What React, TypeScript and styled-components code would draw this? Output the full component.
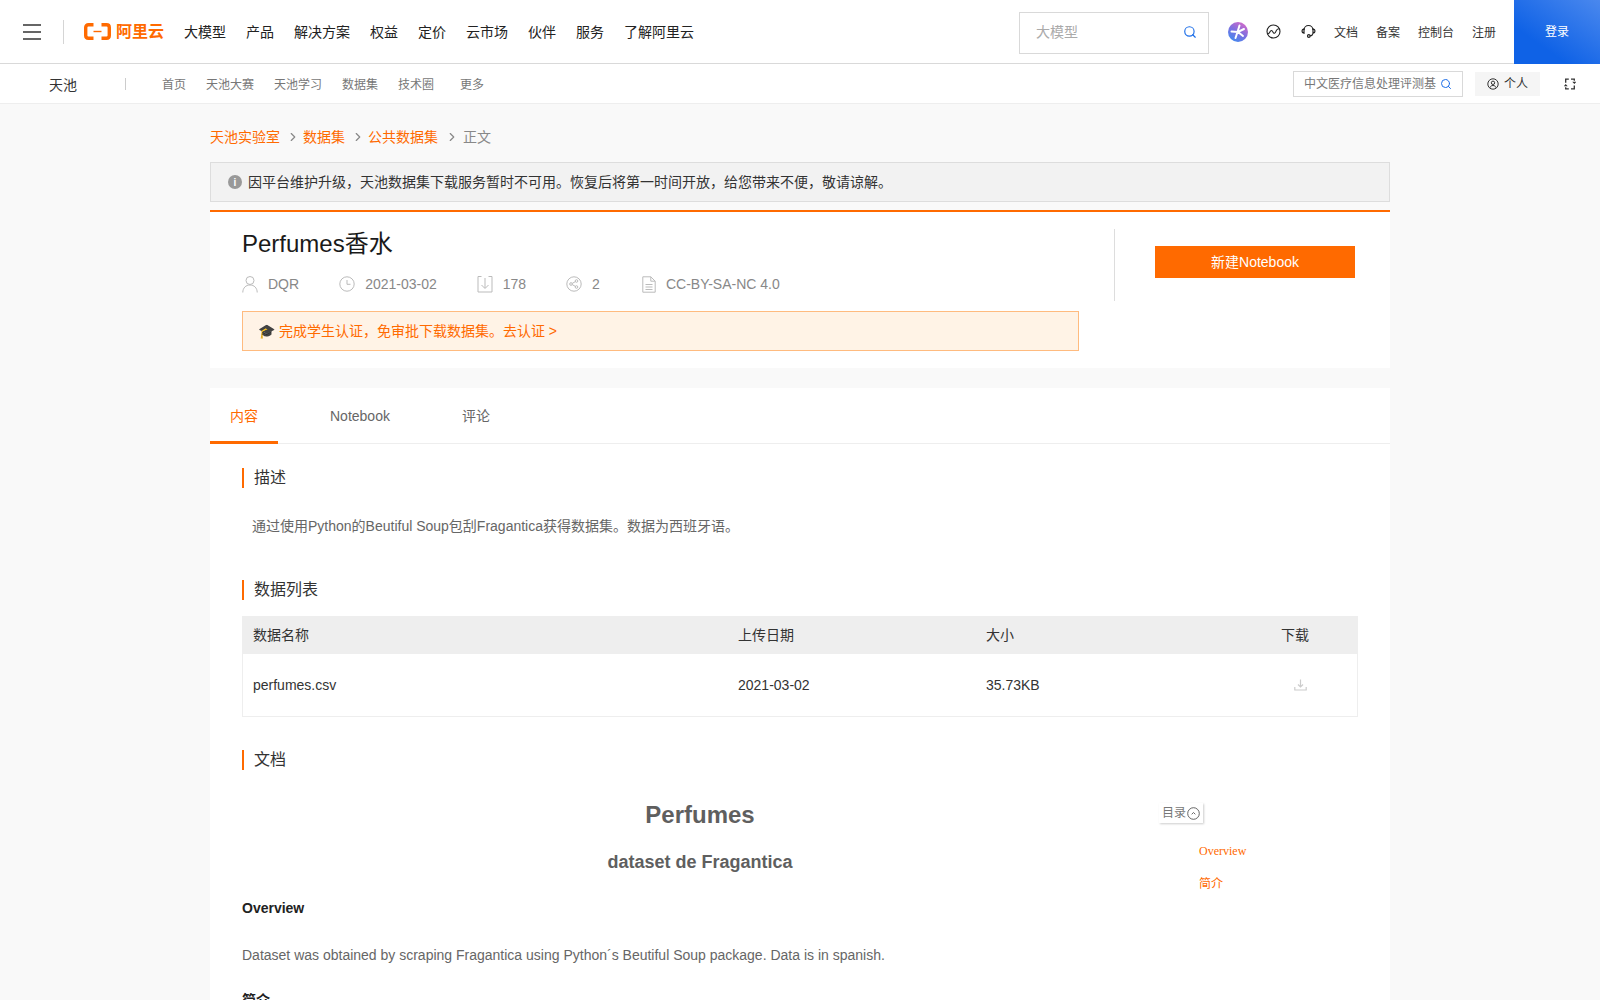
import React from 'react'
import styled, { createGlobalStyle } from 'styled-components'
import { ChevronRight, Search } from 'lucide-react'

const orange = '#ff6a00'
const fontStack = '"Liberation Sans", "Noto Sans CJK SC", sans-serif'

const GlobalStyle = createGlobalStyle`
  html, body {
    margin: 0;
    padding: 0;
    height: 100%;
    overflow: hidden;
    background: #f9f9f9;
  }
  body {
    font-family: ${fontStack};
    line-height: 1.5;
    color: #333;
  }
  * { box-sizing: border-box; }
`

const TopBar = styled.header`
  display: flex;
  align-items: center;
  height: 64px;
  padding-left: 23px;
  background: #fff;
  border-bottom: 1px solid #d9d9d9;
`

const Burger = styled.div`
  display: flex;
  flex-direction: column;
  gap: 5px;
  width: 18px;
  span {
    display: block;
    height: 2px;
    background: #666;
  }
`

const Divider = styled.div`
  width: 1px;
  height: 24px;
  margin: 0 20px 0 22px;
  background: #d5d5d5;
`

const Logo = styled.a`
  display: flex;
  align-items: center;
  gap: 5px;
  width: 80px;
  margin-right: 20px;
  color: ${orange};
  font-size: 16px;
  font-weight: bold;
  white-space: nowrap;
`

const MainNav = styled.nav`
  display: flex;
  gap: 20px;
  flex: 1;
  margin-top: 2px;
  font-size: 14px;
  color: #222;
`

const TopSearch = styled.div`
  display: flex;
  align-items: center;
  justify-content: space-between;
  width: 190px;
  height: 42px;
  margin-top: 2px;
  padding: 0 11px 0 16px;
  border: 1px solid #d9d9d9;
  color: #aaa;
  font-size: 14px;
  svg { margin-bottom: 2px; }
`

const ToolIcons = styled.div`
  display: flex;
  align-items: center;
  width: 305px;
  padding-left: 19px;
  font-size: 12px;
  color: #333;
`

const IconSlot = styled.span<{ $w: number }>`
  display: flex;
  align-items: center;
  width: ${(p) => p.$w}px;
`

const ToolLink = styled.a<{ $w: number }>`
  display: block;
  width: ${(p) => p.$w}px;
  margin-top: 2px;
  white-space: nowrap;
`

const LoginButton = styled.a`
  display: flex;
  align-items: center;
  justify-content: center;
  width: 86px;
  height: 64px;
  align-self: flex-start;
  background: linear-gradient(35deg, #0f62e6 30%, #4a88ee 100%);
  color: #fff;
  font-size: 12px;
`

const SubBar = styled.div`
  display: flex;
  align-items: center;
  height: 40px;
  padding-left: 49px;
  background: #fff;
  border-bottom: 1px solid #eee;
`

const SubTitle = styled.div`
  width: 76px;
  margin-top: 4px;
  font-size: 14px;
  color: #333;
`

const SubDivider = styled.div`
  width: 1px;
  height: 12px;
  margin-right: 36px;
  background: #ccc;
`

const SubNav = styled.nav`
  display: flex;
  gap: 20px;
  flex: 1;
  margin-top: 2px;
  font-size: 12px;
  color: #777;
`

const SubMore = styled.a`
  margin-left: 6px;
`

const SubSearch = styled.div`
  display: flex;
  align-items: center;
  gap: 4px;
  width: 170px;
  height: 26px;
  padding: 0 6px 0 10px;
  border: 1px solid #d9d9d9;
  font-size: 12px;
  color: #777;
  white-space: nowrap;
  overflow: hidden;
  svg { flex-shrink: 0; }
`

const PersonalButton = styled.a`
  display: flex;
  align-items: center;
  justify-content: center;
  gap: 5px;
  width: 65px;
  height: 24px;
  margin-left: 12px;
  background: #f5f5f5;
  font-size: 12px;
  color: #333;
`

const SwapIcon = styled.div`
  display: flex;
  justify-content: center;
  width: 60px;
`

const Page = styled.main`
  width: 1180px;
  margin: 0 auto;
`

const Crumbs = styled.div`
  display: flex;
  align-items: center;
  height: 58px;
  padding-top: 8px;
  font-size: 14px;
  color: #888;
  a { color: ${orange}; }
  svg { margin: 0 3.5px 0 5.5px; color: #888; }
  svg:last-of-type { margin: 0 4.5px 0 6.5px; }
`

const Notice = styled.div`
  display: flex;
  align-items: center;
  gap: 6px;
  height: 40px;
  padding-left: 17px;
  background: #f2f2f2;
  border: 1px solid #ddd;
  font-size: 14px;
  color: #333;
`

const InfoDot = styled.span`
  display: flex;
  align-items: center;
  justify-content: center;
  width: 14px;
  height: 14px;
  border-radius: 50%;
  background: #999;
  color: #fff;
  font-size: 10px;
  font-weight: bold;
`

const HeadCard = styled.section`
  display: flex;
  margin-top: 8px;
  height: 158px;
  background: #fff;
  border-top: 2px solid ${orange};
`

const HeadMain = styled.div`
  width: 869px;
  padding: 16px 0 0 32px;
`

const Title = styled.h1`
  margin: 0;
  font-size: 24px;
  font-weight: normal;
  line-height: 32px;
  color: #1a1a1a;
`

const MetaRow = styled.div`
  display: flex;
  align-items: center;
  gap: 40px;
  margin-top: 12px;
  height: 24px;
  font-size: 14px;
  color: #888;
`

const MetaItem = styled.span`
  display: flex;
  align-items: center;
  gap: 10px;
  svg { color: #bbb; }
  &:last-child { margin-left: 2px; }
`

const StudentAlert = styled.a`
  display: flex;
  align-items: center;
  gap: 4px;
  height: 40px;
  margin-top: 15px;
  padding-left: 15px;
  background: #fff3e6;
  border: 1px solid #ffbb7f;
  font-size: 14px;
  color: ${orange};
`

const HeadSide = styled.div`
  flex: 1;
  display: flex;
  align-items: flex-start;
  margin: 17px 0 0 35px;
  height: 72px;
  padding: 17px 0 0 40px;
  border-left: 1px solid #ddd;
`

const PrimaryButton = styled.a`
  display: flex;
  align-items: center;
  justify-content: center;
  width: 200px;
  height: 32px;
  background: ${orange};
  color: #fff;
  font-size: 14px;
`

const BodyCard = styled.section`
  margin-top: 20px;
  padding-bottom: 60px;
  background: #fff;
`

const Tabs = styled.div`
  display: flex;
  height: 56px;
  border-bottom: 1px solid #eee;
  font-size: 14px;
`

const Tab = styled.a<{ $active?: boolean; $pad: number }>`
  display: flex;
  align-items: center;
  height: 56px;
  padding: 4px ${(p) => p.$pad}px 0;
  color: ${(p) => (p.$active ? orange : '#666')};
  border-bottom: 3px solid ${(p) => (p.$active ? orange : 'transparent')};
`

const Content = styled.div`
  padding: 0 32px;
`

const SectionTitle = styled.h3<{ $top: number }>`
  margin: ${(p) => p.$top}px 0 0;
  padding-left: 10px;
  border-left: 2px solid ${orange};
  font-size: 16px;
  font-weight: normal;
  line-height: 20px;
  color: #333;
`

const Description = styled.p`
  margin: 28px 0 0 10px;
  font-size: 14px;
  line-height: 20px;
  color: #666;
`

const DataTable = styled.div`
  margin-top: 16px;
  border: 1px solid #eee;
  font-size: 14px;
  color: #333;
`

const DataRow = styled.div<{ $head?: boolean }>`
  display: grid;
  grid-template-columns: 485px 248px 295px 1fr;
  align-items: center;
  height: ${(p) => (p.$head ? 37 : 62)}px;
  padding-left: 10px;
  background: ${(p) => (p.$head ? '#eee' : '#fff')};
`

const DownloadCell = styled.span`
  display: flex;
  padding-left: 13px;
`

const Doc = styled.div`
  display: grid;
  grid-template-columns: 916px 1fr;
  margin-top: 20px;
`

const DocBody = styled.article`
  color: #666;
  font-size: 14px;
`

const DocH1 = styled.h1`
  margin: 0;
  padding-top: 9px;
  text-align: center;
  font-size: 24px;
  line-height: 32px;
  color: #5f5f5f;
`

const DocH2 = styled.h2`
  margin: 18px 0 0;
  text-align: center;
  font-size: 18px;
  line-height: 26px;
  color: #5f5f5f;
`

const DocH3 = styled.h3<{ $top: number }>`
  margin: ${(p) => p.$top}px 0 0;
  font-size: 14px;
  line-height: 20px;
  color: #222;
`

const DocText = styled.p`
  margin: 27px 0 0;
  line-height: 20px;
`

const Toc = styled.aside`
  padding: 13px 0 0 1px;
`

const TocToggle = styled.div`
  display: flex;
  align-items: center;
  gap: 1px;
  width: 44px;
  height: 20px;
  padding-left: 3px;
  box-shadow: 1px 1px 2px rgba(0, 0, 0, 0.2);
  font-size: 12px;
  color: #777;
`

const TocLink = styled.a<{ $top: number }>`
  display: block;
  margin: ${(p) => p.$top}px 0 0 40px;
  font-family: "Liberation Serif", "Noto Sans CJK SC", serif;
  font-size: 12px;
  line-height: 16px;
  color: ${orange};
`

const LogoMark = () => (
  <svg width="27" height="17" viewBox="0 0 27 17" fill="none" stroke={orange}>
    <path d="M9.500 1.700H4.500C2.800 1.700 1.700 2.800 1.700 4.500v8c0 1.700 1.100 2.800 2.800 2.800h5" strokeWidth="3.400" />
    <path d="M17.500 1.700h5c1.700 0 2.800 1.100 2.800 2.800v8c0 1.700-1.100 2.800-2.800 2.800h-5" strokeWidth="3.400" />
    <path d="M9.500 8.500h8" strokeWidth="1.400" />
  </svg>
)

const StarBall = () => (
  <svg width="20" height="20" viewBox="0 0 20 20">
    <defs>
      <linearGradient id="ball" x1="0.8" y1="0" x2="0.2" y2="1">
        <stop offset="0" stopColor="#d86ac8" />
        <stop offset="0.5" stopColor="#7d6fe0" />
        <stop offset="1" stopColor="#3f8cf0" />
      </linearGradient>
    </defs>
    <circle cx="10" cy="10" r="10" fill="url(#ball)" />
    <path d="M11.500 3.500 9.500 10 7.500 16M3.500 9.500 10 10l6-3M10 10l5 4" fill="none" stroke="#fff" strokeWidth="2" strokeLinecap="round" />
  </svg>
)

const GlobeIcon = () => (
  <svg width="15" height="15" viewBox="0 0 15 15" fill="none" stroke="#222" strokeWidth="1.100">
    <circle cx="7.500" cy="7.500" r="6.500" />
    <path d="M1.500 10c1.500 0 2-1.200 2.500-2.200S5.500 6 6.300 7s.9 2.500 2.200 2.200 1.300-2 2-3 1.500-1.300 2.700-1.400" />
  </svg>
)

const HeadsetIcon = () => (
  <svg width="15" height="15" viewBox="0 0 15 15" fill="none" stroke="#222" strokeWidth="1.200">
    <path d="M3 6a4.500 4.500 0 0 1 9 0" />
    <path d="M3 4.800C1.700 5 1 5.800 1 7s.7 2 2 2.200zM12 4.800c1.300.2 2 1 2 2.200s-.7 2-2 2.200z" />
    <path d="M12 9.500c-.3 1.500-1.500 2.300-3 2.400" />
    <circle cx="7.800" cy="12" r="1.300" />
  </svg>
)

const UserCircleIcon = () => (
  <svg width="12" height="12" viewBox="0 0 12 12" fill="none" stroke="#333" strokeWidth="1">
    <circle cx="6" cy="6" r="5.200" />
    <circle cx="6" cy="4.800" r="1.700" />
    <path d="M2.800 9.800c.6-1.600 1.800-2.300 3.200-2.300s2.600.7 3.200 2.300" />
  </svg>
)

const SwapArrows = () => (
  <svg width="12" height="12" viewBox="0 0 12 12" fill="none" stroke="#333" strokeWidth="1.300">
    <path d="M4.800 1.200H1.700v3.500M7 1.200h3.300v1.500M7 10.800h3.300V7.500M4.800 10.800H1.700V9.300" />
    <path d="M8.300 3.800h4L10.300 6zM-.3 8.300h4L1.700 6z" fill="#333" stroke="none" />
  </svg>
)

const PersonIcon = () => (
  <svg width="16" height="18" viewBox="0 0 16 18" fill="none" stroke="currentColor" strokeWidth="1">
    <circle cx="8" cy="5.500" r="4" />
    <path d="M.8 17.500c0-4.500 3-7.500 7.200-7.500s7.200 3 7.200 7.500" />
  </svg>
)

const ClockIcon = () => (
  <svg width="16" height="16" viewBox="0 0 16 16" fill="none" stroke="currentColor" strokeWidth="1">
    <circle cx="8" cy="8" r="7.200" />
    <path d="M8 4v4.300h3.500" />
  </svg>
)

const DownloadBoxIcon = () => (
  <svg width="16" height="18" viewBox="0 0 16 18" fill="none" stroke="currentColor" strokeWidth="1">
    <path d="M4.500 1.500H1v15.500h14V1.500h-3.500" />
    <path d="M8 3v10M4.500 10 8 13.500 11.500 10" />
  </svg>
)

const ShareIcon = () => (
  <svg width="16" height="16" viewBox="0 0 16 16" fill="none" stroke="currentColor" strokeWidth="1">
    <circle cx="8" cy="8" r="7.200" />
    <circle cx="5" cy="8" r="1.300" />
    <circle cx="10.500" cy="5" r="1.300" />
    <circle cx="10.500" cy="11" r="1.300" />
    <path d="m6.200 7.400 3.200-1.800M6.200 8.600l3.200 1.800" />
  </svg>
)

const FileIcon = () => (
  <svg width="14" height="17" viewBox="0 0 14 17" fill="none" stroke="currentColor" strokeWidth="1">
    <path d="M.8.800h8l4.400 4.400v11H.8z" />
    <path d="M8.800.800v4.400h4.400M3.500 8.500h7M3.500 11h7M3.500 13.500h7" />
  </svg>
)

const TrayDownIcon = () => (
  <svg width="13" height="12" viewBox="0 0 13 12" fill="none" stroke="#ccc" strokeWidth="1.200">
    <path d="M6.500 0.500v7M4 5.500l2.500 2.500L9 5.500M.8 8v3h11.400V8" />
  </svg>
)

const ChevronCircle = () => (
  <svg width="13" height="13" viewBox="0 0 13 13" fill="none" stroke="#555" strokeWidth="0.900">
    <circle cx="6.500" cy="6.500" r="5.800" />
    <path d="m4.700 7.300 1.800-1.800 1.800 1.800" />
  </svg>
)

const mainLinks = ['大模型', '产品', '解决方案', '权益', '定价', '云市场', '伙伴', '服务', '了解阿里云']
const subLinks = ['首页', '天池大赛', '天池学习', '数据集', '技术圈']

export default function App() {
  return (
    <>
      <GlobalStyle />
      <TopBar>
        <Burger>
          <span />
          <span />
          <span />
        </Burger>
        <Divider />
        <Logo>
          <LogoMark />
          阿里云
        </Logo>
        <MainNav>
          {mainLinks.map((l) => (
            <a key={l}>{l}</a>
          ))}
        </MainNav>
        <TopSearch>
          大模型
          <Search size={14} color="#1d6ee8" />
        </TopSearch>
        <ToolIcons>
          <IconSlot $w={38}>
            <StarBall />
          </IconSlot>
          <IconSlot $w={35}>
            <GlobeIcon />
          </IconSlot>
          <IconSlot $w={33}>
            <HeadsetIcon />
          </IconSlot>
          <ToolLink $w={42}>文档</ToolLink>
          <ToolLink $w={42}>备案</ToolLink>
          <ToolLink $w={54}>控制台</ToolLink>
          <ToolLink $w={30}>注册</ToolLink>
        </ToolIcons>
        <LoginButton>登录</LoginButton>
      </TopBar>
      <SubBar>
        <SubTitle>天池</SubTitle>
        <SubDivider />
        <SubNav>
          {subLinks.map((l) => (
            <a key={l}>{l}</a>
          ))}
          <SubMore>更多</SubMore>
        </SubNav>
        <SubSearch>
          中文医疗信息处理评测基
          <Search size={12} color="#1d6ee8" />
        </SubSearch>
        <PersonalButton>
          <UserCircleIcon />
          个人
        </PersonalButton>
        <SwapIcon>
          <SwapArrows />
        </SwapIcon>
      </SubBar>
      <Page>
        <Crumbs>
          <a>天池实验室</a>
          <ChevronRight size={14} />
          <a>数据集</a>
          <ChevronRight size={14} />
          <a>公共数据集</a>
          <ChevronRight size={14} />
          正文
        </Crumbs>
        <Notice>
          <InfoDot>i</InfoDot>
          因平台维护升级，天池数据集下载服务暂时不可用。恢复后将第一时间开放，给您带来不便，敬请谅解。
        </Notice>
        <HeadCard>
          <HeadMain>
            <Title>Perfumes香水</Title>
            <MetaRow>
              <MetaItem>
                <PersonIcon />
                DQR
              </MetaItem>
              <MetaItem>
                <ClockIcon />
                2021-03-02
              </MetaItem>
              <MetaItem>
                <DownloadBoxIcon />
                178
              </MetaItem>
              <MetaItem>
                <ShareIcon />2
              </MetaItem>
              <MetaItem>
                <FileIcon />
                CC-BY-SA-NC 4.0
              </MetaItem>
            </MetaRow>
            <StudentAlert>🎓 完成学生认证，免审批下载数据集。去认证 &gt;</StudentAlert>
          </HeadMain>
          <HeadSide>
            <PrimaryButton>新建Notebook</PrimaryButton>
          </HeadSide>
        </HeadCard>
        <BodyCard>
          <Tabs>
            <Tab $active $pad={20}>
              内容
            </Tab>
            <Tab $pad={52}>Notebook</Tab>
            <Tab $pad={20}>评论</Tab>
          </Tabs>
          <Content>
            <SectionTitle $top={24}>描述</SectionTitle>
            <Description>通过使用Python的Beutiful Soup包刮Fragantica获得数据集。数据为西班牙语。</Description>
            <SectionTitle $top={44}>数据列表</SectionTitle>
            <DataTable>
              <DataRow $head>
                <span>数据名称</span>
                <span>上传日期</span>
                <span>大小</span>
                <span>下载</span>
              </DataRow>
              <DataRow>
                <span>perfumes.csv</span>
                <span>2021-03-02</span>
                <span>35.73KB</span>
                <DownloadCell>
                  <TrayDownIcon />
                </DownloadCell>
              </DataRow>
            </DataTable>
            <SectionTitle $top={33}>文档</SectionTitle>
            <Doc>
              <DocBody>
                <DocH1>Perfumes</DocH1>
                <DocH2>dataset de Fragantica</DocH2>
                <DocH3 $top={23}>Overview</DocH3>
                <DocText>Dataset was obtained by scraping Fragantica using Python´s Beutiful Soup package. Data is in spanish.</DocText>
                <DocH3 $top={25}>简介</DocH3>
              </DocBody>
              <Toc>
                <TocToggle>
                  目录
                  <ChevronCircle />
                </TocToggle>
                <TocLink $top={20}>Overview</TocLink>
                <TocLink $top={17}>简介</TocLink>
              </Toc>
            </Doc>
          </Content>
        </BodyCard>
      </Page>
    </>
  )
}
